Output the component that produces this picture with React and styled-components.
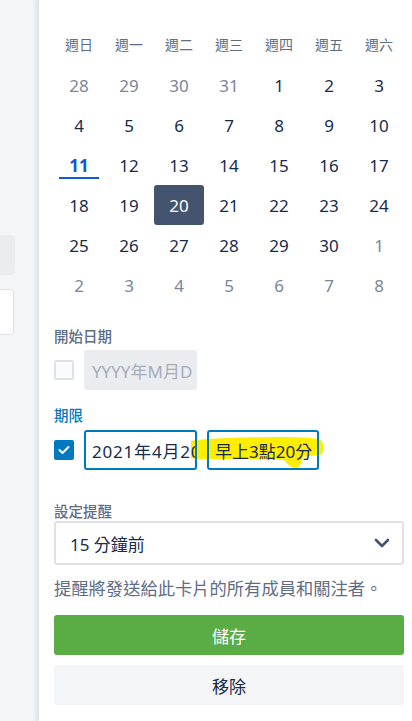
import styled, { createGlobalStyle } from "styled-components"

const Global = createGlobalStyle`
    html, body { margin: 0; padding: 0; background: #f4f5f7; }
    body { font-family: "Noto Sans", "Noto Sans CJK TC", sans-serif; color: #172b4d; }
`

const Page = styled.div`
    display: flex;
    width: 412px;
    height: 721px;
    overflow: hidden;
`

const Backdrop = styled.div`
    width: 39px;
    flex: none;
    padding-top: 235px;
    background: linear-gradient(to right, #f4f5f7 0%, #f4f5f7 85%, #e9ebef 100%);
`

const GrayStub = styled.div`
    width: 15px;
    height: 40px;
    background: #ebecf0;
    border-radius: 0 4px 4px 0;
`

const WhiteStub = styled.div`
    width: 13px;
    height: 44px;
    margin-top: 14px;
    background: #fff;
    border: 1px solid #dfe1e6;
    border-left: none;
    border-radius: 0 4px 4px 0;
`

const Panel = styled.div`
    flex: 1;
    background: #fff;
    padding: 23px 8px 0 15px;
    box-shadow: -1px 0 0 #e1e4e9, -3px 0 4px rgba(9, 30, 66, 0.06);
`

const Grid = styled.div`
    display: grid;
    grid-template-columns: repeat(7, 50px);
`

const Weekday = styled.div`
    height: 42px;
    display: flex;
    align-items: center;
    justify-content: center;
    font-size: 14px;
    color: #5e6c84;
`

const Day = styled.div`
    position: relative;
    height: 40px;
    display: flex;
    align-items: center;
    justify-content: center;
    font-size: 17px;
    border-radius: 3px;
    color: ${({ $muted, $today, $selected }) =>
        $selected ? "#fff" : $today ? "#0c5ad8" : $muted ? "#7a869a" : "#172b4d"};
    background: ${({ $selected }) => ($selected ? "#44546f" : "transparent")};
    font-weight: ${({ $today }) => ($today ? 700 : 400)};
    ${({ $today }) =>
        $today &&
        `&::after {
            content: "";
            position: absolute;
            left: 5px;
            right: 5px;
            bottom: 6px;
            height: 2px;
            background: #0c5ad8;
        }`}
`

const Label = styled.div`
    margin-top: ${({ $top }) => $top}px;
    height: 20px;
    line-height: 20px;
    font-size: 14.5px;
    font-weight: 500;
    color: ${({ $active }) => ($active ? "#0079bf" : "#5e6c84")};
`

const FieldRow = styled.div`
    position: relative;
    display: flex;
    align-items: center;
    gap: 10px;
    margin-top: ${({ $top }) => $top}px;
    height: 40px;
`

const Check = styled.div`
    position: relative;
    z-index: 1;
    width: 20px;
    height: 20px;
    box-sizing: border-box;
    border-radius: 2px;
    display: flex;
    align-items: center;
    justify-content: center;
    background: ${({ $on }) => ($on ? "#0079bf" : "#fafbfc")};
    border: ${({ $on }) => ($on ? "none" : "2px solid #dfe1e6")};
`

const Field = styled.div`
    position: relative;
    z-index: 1;
    box-sizing: border-box;
    width: ${({ $w }) => $w}px;
    height: 40px;
    padding: 0 6px;
    display: flex;
    align-items: center;
    overflow: hidden;
    white-space: nowrap;
    font-size: 17px;
    letter-spacing: ${({ $spread }) => ($spread ? "0.8px" : "0")};
    border-radius: 3px;
    border: 2px solid ${({ $disabled }) => ($disabled ? "#ebecf0" : "#0079bf")};
    background: ${({ $disabled }) => ($disabled ? "#ebecf0" : "transparent")};
    color: ${({ $disabled }) => ($disabled ? "#a5adba" : "#172b4d")};
`

const Marker = styled.svg`
    position: absolute;
    left: 0;
    top: 0;
    z-index: 0;
    pointer-events: none;
`

const Select = styled.div`
    height: 44px;
    box-sizing: border-box;
    border: 2px solid #dfe1e6;
    border-radius: 3px;
    display: flex;
    align-items: center;
    justify-content: space-between;
    padding: 0 12px 0 14px;
    font-size: 17px;
    color: #172b4d;
`

const Hint = styled.p`
    margin: 12px 0 0;
    line-height: 24px;
    font-size: 17.3px;
    color: #5e6c84;
    white-space: nowrap;
`

const Button = styled.div`
    margin-top: ${({ $top }) => $top}px;
    height: 40px;
    border-radius: 3px;
    display: flex;
    align-items: center;
    justify-content: center;
    font-size: 17px;
    color: ${({ $primary }) => ($primary ? "#fff" : "#172b4d")};
    background: ${({ $primary }) => ($primary ? "#5aac44" : "#f4f5f7")};
`

const weekdays = ["週日", "週一", "週二", "週三", "週四", "週五", "週六"]

const days = [
    ...[28, 29, 30, 31].map((d) => ({ d, muted: true })),
    ...Array.from({ length: 30 }, (_, i) => ({ d: i + 1 })),
    ...[1, 2, 3, 4, 5, 6, 7, 8].map((d) => ({ d, muted: true })),
]

const App = () => {
    return (
        <Page>
            <Global />
            <Backdrop>
                <GrayStub />
                <WhiteStub />
            </Backdrop>
            <Panel>
                <Grid>
                    {weekdays.map((w) => (
                        <Weekday key={w}>{w}</Weekday>
                    ))}
                    {days.map((x, i) => (
                        <Day
                            key={i}
                            $muted={x.muted}
                            $today={!x.muted && x.d === 11}
                            $selected={!x.muted && x.d === 20}
                        >
                            {x.d}
                        </Day>
                    ))}
                </Grid>

                <Label $top={21}>開始日期</Label>
                <FieldRow $top={4}>
                    <Check />
                    <Field $w={113} $disabled>YYYY年M月D</Field>
                </FieldRow>

                <Label $top={15} $active>期限</Label>
                <FieldRow $top={5}>
                    {/* yellow marker annotation over the time field */}
                    <Marker width="280" height="44" viewBox="0 0 280 44">
                        <path
                            d="M137 11 C150 8 200 7 230 7 C250 7 262 8 267 10 C270 14 270 22 267 25 C258 26 252 26 249 27 C247 33 246 38 242 38 C236 38 233 33 230 30 C210 29 170 29 146 29 C140 29 137 28 137 28 Z"
                            fill="#ffee00"
                        />
                    </Marker>
                    <Check $on>
                        <svg width="12" height="10" viewBox="0 0 12 10">
                            <path d="M1.5 5 L4.5 8 L10.5 2" fill="none" stroke="#fff" strokeWidth="2" strokeLinecap="round" strokeLinejoin="round" />
                        </svg>
                    </Check>
                    <Field $w={113} $spread>2021年4月20日</Field>
                    <Field $w={112}>早上3點20分</Field>
                </FieldRow>

                <Label $top={31}>設定提醒</Label>
                <Select>
                    <span>15 分鐘前</span>
                    <svg width="16" height="10" viewBox="0 0 16 10">
                        <path d="M2 2 L8 8 L14 2" fill="none" stroke="#44546f" strokeWidth="2.6" strokeLinecap="round" strokeLinejoin="round" />
                    </svg>
                </Select>
                <Hint>提醒將發送給此卡片的所有成員和關注者。</Hint>
                <Button $top={14} $primary>儲存</Button>
                <Button $top={10}>移除</Button>
            </Panel>
        </Page>
    )
}

export default App
